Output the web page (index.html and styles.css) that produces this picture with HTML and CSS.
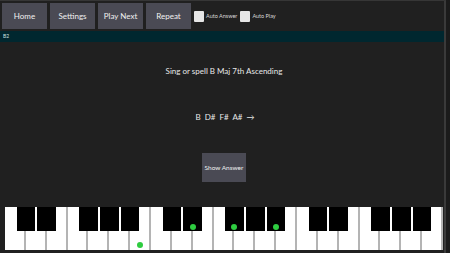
FILE: index.html
```html
<!DOCTYPE HTML>
<html lang="en">
  <head>
    <title>Ear Trainer</title>
    <link rel="stylesheet" href="styles.css">
  </head>
  <body>
    <div class="App">
      <div class="Toolbar">
        <button class="Btn">Home</button>
        <button class="Btn">Settings</button>
        <button class="Btn">Play Next</button>
        <button class="Btn">Repeat</button>
        <label class="Check"><span class="Box"></span>Auto Answer</label>
        <label class="Check"><span class="Box"></span>Auto Play</label>
      </div>
      <div class="Status">B2</div>
      <div class="Main">
        <div class="Prompt">Sing or spell B Maj 7th Ascending</div>
        <div class="Notes">B&nbsp;&nbsp;D#&nbsp;&nbsp;F#&nbsp;&nbsp;A#&nbsp;&nbsp;→</div>
        <button class="Btn ShowBtn">Show Answer</button>
      </div>
      <div class="Piano" id="Piano"></div>
    </div>
    <script>
      (function () {
        var piano = document.getElementById("Piano"),
            keyW = 438 / 21,
            blackAfter = [0, 1, 3, 4, 5],
            lit = { "6": true, "d8": true, "d10": true, "d12": true };

        for (var i = 0; i < 21; i++) {
          var w = document.createElement("div");
          w.className = "White";
          if (lit[String(i)]) {
            var dot = document.createElement("span");
            dot.className = "Dot";
            w.appendChild(dot);
          }
          piano.appendChild(w);
        }

        for (var i = 0; i < 20; i++) {
          if (blackAfter.indexOf(i % 7) < 0) continue;
          var b = document.createElement("div");
          b.className = "Black";
          b.style.left = ((i + 1) * keyW - 9.25) + "px";
          if (lit["d" + i]) {
            var dot = document.createElement("span");
            dot.className = "Dot";
            b.appendChild(dot);
          }
          piano.appendChild(b);
        }
      })();
    </script>
  </body>
</html>
```
FILE: styles.css
```css
* {
  margin: 0;
  padding: 0;
  box-sizing: border-box;
}

body {
  width: 450px;
  height: 253px;
  overflow: hidden;
  background: #1b1b1b;
  font-family: Lato, "Open Sans", sans-serif;
  color: #e8e8e8;
}

.App {
  width: 446px;
  height: 253px;
  background: #202020;
  border-top: 1px solid #363636;
  border-right: 2px solid #3a3a3a;
}

.Toolbar {
  display: flex;
  align-items: center;
  gap: 3px;
  height: 29px;
  padding: 1px 2px 0;
}

.Btn {
  width: 45px;
  height: 26px;
  border: none;
  background: #4a4a54;
  color: #f0f0f0;
  font-family: Lato, "Open Sans", sans-serif;
  font-size: 8px;
}

.Check {
  display: flex;
  align-items: center;
  font-size: 5.5px;
  color: #d8d8d8;
}

.Box {
  width: 10px;
  height: 11px;
  margin: 0 2px 0 0;
  border-radius: 1px;
  background: #e6e6e6;
}

.Status {
  height: 11px;
  margin-top: 1px;
  padding: 2px 3px;
  background: #00272f;
  font-size: 5px;
  color: #cfe0e0;
}

.Main {
  display: flex;
  flex-direction: column;
  align-items: center;
  height: 165px;
}

.Prompt {
  margin-top: 24px;
  padding-left: 4px;
  font-size: 8px;
}

.Notes {
  margin-top: 36px;
  padding-left: 6px;
  font-size: 8px;
}

.ShowBtn {
  width: 44px;
  height: 29px;
  margin-top: 31px;
  margin-left: 4px;
  font-size: 6.5px;
}

.Piano {
  position: relative;
  display: flex;
  width: 438px;
  height: 43px;
  margin-left: 5px;
  background: #ffffff;
}

.White {
  position: relative;
  flex: 1;
  border-right: 2px solid #b4b4b4;
}

.White:last-child {
  border-right: none;
}

.White .Dot {
  bottom: 2px;
}

.Black {
  position: absolute;
  top: 0;
  width: 18.5px;
  height: 24px;
  background: #000000;
}

.Dot {
  position: absolute;
  left: 50%;
  bottom: 1px;
  width: 6px;
  height: 6px;
  margin-left: -3px;
  border-radius: 50%;
  background: #2ecc40;
}
```
